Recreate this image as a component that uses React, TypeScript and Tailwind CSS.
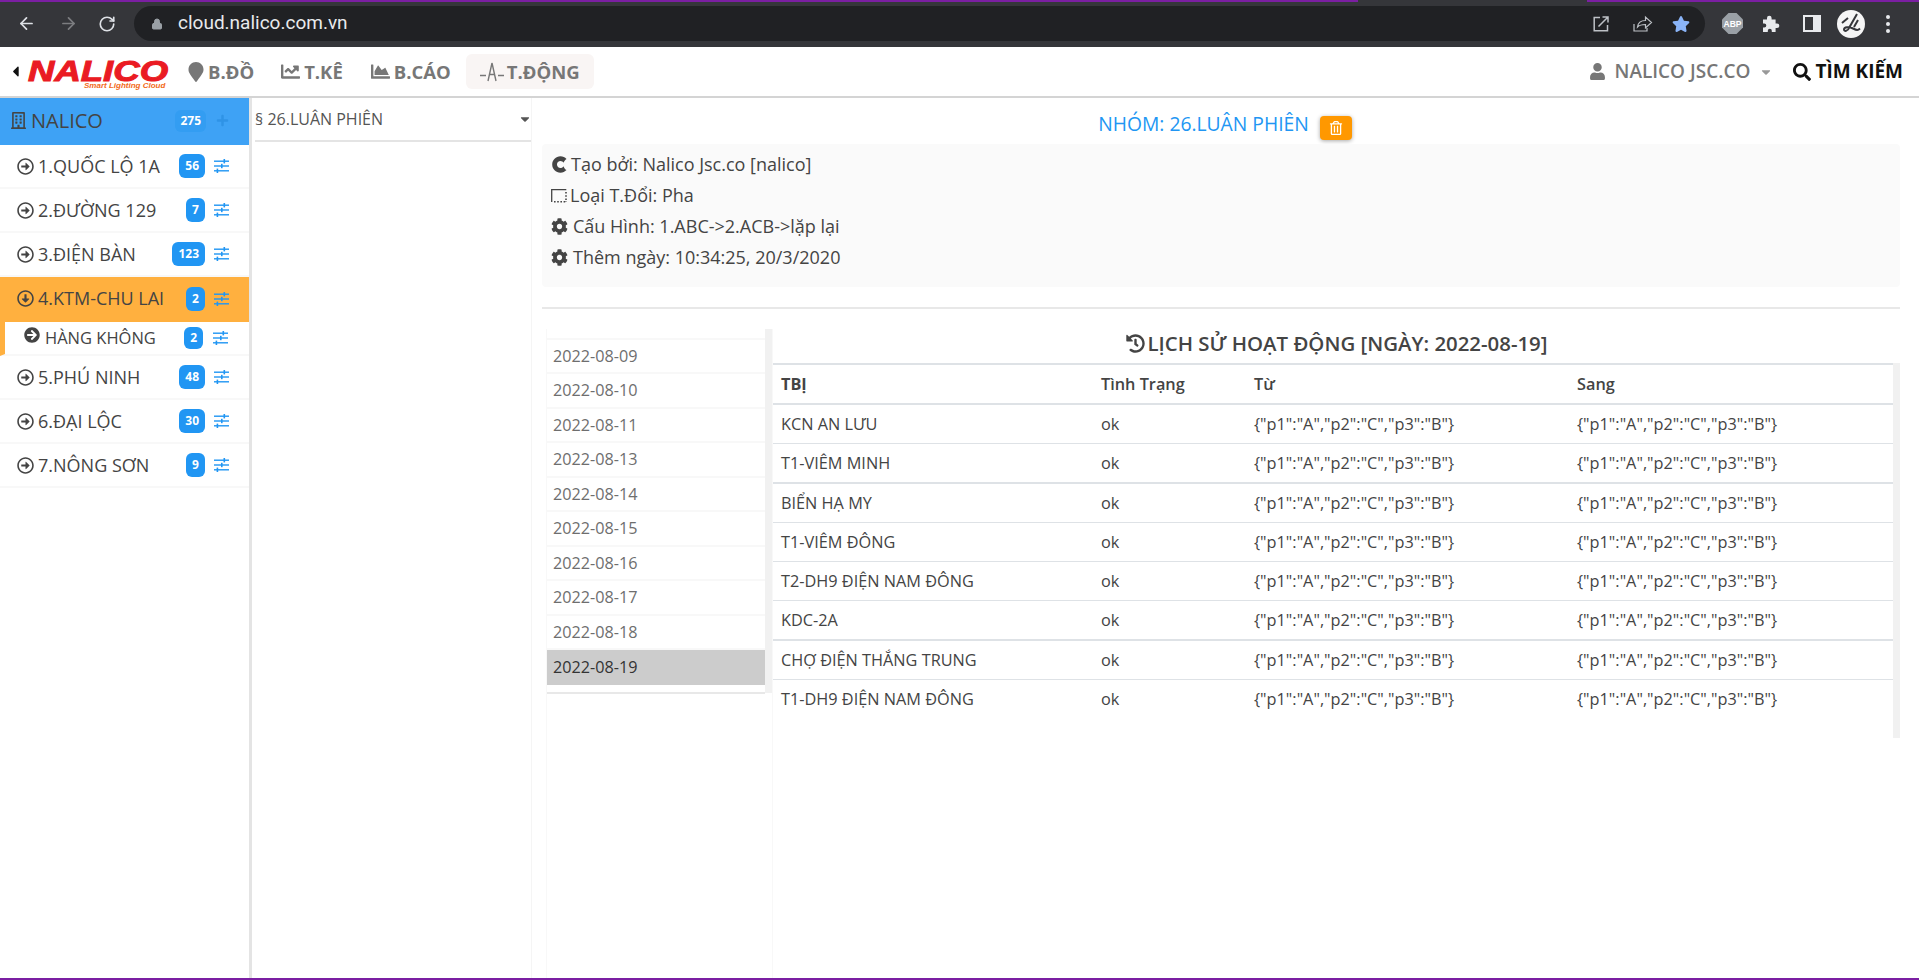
import React from "react"
import {
  FaArrowCircleRight,
  FaCaretDown,
  FaCaretLeft,
  FaChartArea,
  FaChartLine,
  FaCog,
  FaCuttlefish,
  FaHistory,
  FaMapMarker,
  FaPlus,
  FaRegArrowAltCircleDown,
  FaRegArrowAltCircleRight,
  FaRegBuilding,
  FaRegTrashAlt,
  FaSearch,
  FaStar,
  FaUser,
} from "react-icons/fa"
import { ArrowLeft, ArrowRight, RotateCw, Lock } from "lucide-react"

const groups = [
  { name: "1.QUỐC LỘ 1A", count: 56 },
  { name: "2.ĐƯỜNG 129", count: 7 },
  { name: "3.ĐIỆN BÀN", count: 123 },
  { name: "4.KTM-CHU LAI", count: 2, open: true },
  { name: "5.PHÚ NINH", count: 48 },
  { name: "6.ĐẠI LỘC", count: 30 },
  { name: "7.NÔNG SƠN", count: 9 },
]

const dates = [
  "2022-08-09",
  "2022-08-10",
  "2022-08-11",
  "2022-08-13",
  "2022-08-14",
  "2022-08-15",
  "2022-08-16",
  "2022-08-17",
  "2022-08-18",
  "2022-08-19",
]

const devices = [
  "KCN AN LƯU",
  "T1-VIÊM MINH",
  "BIỂN HẠ MY",
  "T1-VIÊM ĐÔNG",
  "T2-DH9 ĐIỆN NAM ĐÔNG",
  "KDC-2A",
  "CHỢ ĐIỆN THẮNG TRUNG",
  "T1-DH9 ĐIỆN NAM ĐÔNG",
]

const phase = '{"p1":"A","p2":"C","p3":"B"}'

// ion-style sliders used on every sidebar row
function Sliders() {
  return (
    <svg width="15" height="14" viewBox="0 0 15 14" className="shrink-0 text-[#2196f3]">
      <g fill="currentColor">
        <rect x="0" y="1.5" width="15" height="1.4" />
        <rect x="0" y="6.3" width="15" height="1.4" />
        <rect x="0" y="11.1" width="15" height="1.4" />
        <rect x="9.5" y="0" width="1.6" height="4.4" />
        <rect x="7" y="4.8" width="1.6" height="4.4" />
        <rect x="2.6" y="9.6" width="1.6" height="4.4" />
      </g>
    </svg>
  )
}

function Badge({ count, small }: { count: number; small?: boolean }) {
  return (
    <span
      className={`flex items-center justify-center rounded-md bg-[#2196f3] font-bold text-white text-[12px] px-[6px] ${
        small ? "h-[22px] min-w-[17px]" : "h-6 min-w-[19px]"
      }`}
    >
      {count}
    </span>
  )
}

function BrowserBar() {
  return (
    <div className="h-[47px] shrink-0 bg-[#35363a] flex flex-col">
      <div className="h-[2px] flex">
        <div className="w-[1358px] bg-[#7b1fa2]" />
        <div className="w-[229px]" />
        <div className="flex-1 bg-[#7b1fa2]" />
      </div>
      <div className="flex-1 flex items-center text-[#dee1e6] pb-[2px]">
        <ArrowLeft className="ml-[17px] w-[19px] h-[19px]" strokeWidth={2.2} />
        <ArrowRight className="ml-[23px] w-[19px] h-[19px] text-[#7c7d80]" strokeWidth={2.2} />
        <RotateCw className="ml-[20px] w-[18px] h-[18px]" strokeWidth={2.2} />
        <div className="ml-[18px] w-[1571px] h-[35px] rounded-full bg-[#202124] flex items-center pl-[17px]">
          <Lock className="w-3 h-[14px] text-[#9aa0a6] fill-[#9aa0a6]" />
          <span className="ml-[15px] text-[19px] text-[#e8eaed] [font-family:Roboto,sans-serif]">cloud.nalico.com.vn</span>
          <div className="ml-auto flex items-center text-[#bdc1c6]">
            <svg width="16" height="16" viewBox="0 0 16 16" fill="none" stroke="currentColor" strokeWidth="1.5">
              <path d="M7 1.5H1.2v13.3h13.3V9" />
              <path d="M5.5 10.5 14.5 1.5M9.5 1h5.5v5.5" />
            </svg>
            <svg width="20" height="17" viewBox="0 0 20 17" fill="none" stroke="currentColor" strokeWidth="1.2" className="ml-[24px]">
              <path d="M1 9v7h13v-3" />
              <path d="M4.5 12c.5-4 3.500-6.500 8-6.500V2l6 5.500-6 5.500V9.500c-3 0-6 .5-8 2.500z" />
            </svg>
            <FaStar className="ml-[19px] mr-[15px] text-[18px] text-[#8ab4f8]" />
          </div>
        </div>
        <svg width="21" height="21" viewBox="0 0 21 21" className="ml-[17px]">
          <polygon points="6.500,0 14.500,0 21,6.500 21,14.500 14.500,21 6.500,21 0,14.500 0,6.500" fill="#9aa0a6" />
          <text x="10.500" y="14" textAnchor="middle" fontSize="8.500" fontWeight="700" fill="#fff" fontFamily="Liberation Sans">ABP</text>
        </svg>
        <svg width="18" height="18" viewBox="0 0 18 18" className="ml-[19px] text-[#e8eaed]">
          <path
            fill="currentColor"
            d="M1 4.500h4V3a2.300 2.300 0 0 1 4.600 0v1.500h4v4H15a2.300 2.300 0 0 1 0 4.600h-1.400V17H9.800v-1.300a2 2 0 0 0-4 0V17H1v-4.500h1.300a2 2 0 0 0 0-4H1z"
          />
        </svg>
        <div className="ml-[23px] w-[18px] h-[17px] border-2 border-[#e8eaed] flex justify-end">
          <div className="w-[6px] bg-[#e8eaed]" />
        </div>
        <svg width="28" height="28" viewBox="0 0 28 28" className="ml-[16px]">
          <circle cx="14" cy="14" r="14" fill="#f5f5f5" />
          <path d="M20 4 12 18c-1 3-5 4-5 1.500s5-3 9-1 5 2 7 0M11 8 5 13M21 10l-4 7" fill="none" stroke="#35363a" strokeWidth="2" />
        </svg>
        <div className="ml-[21px] flex flex-col gap-[3px]">
          <span className="w-1 h-1 rounded-full bg-[#e8eaed]" />
          <span className="w-1 h-1 rounded-full bg-[#e8eaed]" />
          <span className="w-1 h-1 rounded-full bg-[#e8eaed]" />
        </div>
      </div>
    </div>
  )
}

function NavBar() {
  return (
    <div className="h-[51px] shrink-0 bg-white border-b-2 border-[#d4d4d4] flex items-center text-[18.5px] font-bold text-[#777]">
      <FaCaretLeft className="ml-[7px] text-[17px] text-[#111]" />
      <div className="relative ml-[4px] w-[142px] h-[36px]">
        <span className="block mt-[6px] origin-left scale-x-[1.26] italic font-bold text-[29px] leading-[22px] text-[#ea1b23] [font-family:'Liberation_Sans',sans-serif] [-webkit-text-stroke:1px_#ea1b23]">
          NALICO
        </span>
        <span className="absolute left-[56px] top-[28px] whitespace-nowrap italic font-bold text-[8px] leading-none text-[#f26a21] [font-family:'Liberation_Sans',sans-serif]">
          Smart Lighting Cloud
        </span>
      </div>
      <div className="ml-[16px] flex items-center gap-[2px]">
        <FaMapMarker className="text-[20px]" />
        <span>B.ĐỒ</span>
      </div>
      <div className="ml-[27px] flex items-center gap-[4px]">
        <FaChartLine className="text-[19px]" />
        <span>T.KÊ</span>
      </div>
      <div className="ml-[28px] flex items-center gap-[4px]">
        <FaChartArea className="text-[19px]" />
        <span>B.CÁO</span>
      </div>
      <div className="ml-[15px] h-[35px] w-[128px] rounded-md bg-[#f9f5f4] flex items-center pl-[14px] gap-[3px]">
        <svg width="24" height="20" viewBox="0 0 24 20" fill="none" stroke="currentColor" strokeWidth="1.400">
          <path d="M0 13.500h6M18 13.500h6M12 1 8 19M12 1l4 18M9.500 12.500h5" />
        </svg>
        <span>T.ĐỘNG</span>
      </div>
      <div className="ml-auto flex items-center font-semibold text-[19px]">
        <FaUser className="text-[17px]" />
        <span className="ml-[9px]">NALICO JSC.CO</span>
        <FaCaretDown className="ml-[9px] text-[14px] text-[#999]" />
      </div>
      <div className="ml-[20px] mr-[16px] flex items-center gap-[4px] text-[#111] text-[19px]">
        <FaSearch className="text-[18px]" />
        <span>TÌM KIẾM</span>
      </div>
    </div>
  )
}

function Sidebar() {
  return (
    <aside className="w-[252px] shrink-0 border-r-[3px] border-[#e4e4e4] text-[#444] text-[18px] font-medium">
      <div className="h-[47px] bg-[#3ea2f5] flex items-center pl-[10px] pr-[20px] pb-[2px]">
        <FaRegBuilding className="text-[17px]" />
        <span className="ml-[4px] text-[20px] flex-1">NALICO</span>
        <span className="h-[22px] px-[5px] flex items-center rounded-md bg-[#339df2] text-white text-[12px] font-bold">275</span>
        <FaPlus className="ml-[10px] text-[13px] text-[#2f93e6]" />
      </div>
      {groups.map((g) => (
        <React.Fragment key={g.name}>
          <div
            className={`h-[44px] flex items-center pl-[17px] pr-[20px] border-b-2 ${
              g.open ? "bg-[#ffb03f] border-[#ffb03f] h-[45px]" : "bg-white border-[#f8f8f8]"
            }`}
          >
            {g.open ? <FaRegArrowAltCircleDown className="text-[17px]" /> : <FaRegArrowAltCircleRight className="text-[17px]" />}
            <span className="ml-[4px] flex-1">{g.name}</span>
            <Badge count={g.count} />
            <span className="ml-[9px]">
              <Sliders />
            </span>
          </div>
          {g.open && (
            <div className="h-[34px] flex items-center border-l-[5px] border-[#ffb03f] pl-[19px] pr-[21px] text-[16.5px] font-medium border-b-2 border-b-[#f8f8f8]">
              <FaArrowCircleRight className="text-[16px] -mt-[6px]" />
              <span className="ml-[5px] flex-1">HÀNG KHÔNG</span>
              <Badge count={2} small />
              <span className="ml-[10px]">
                <Sliders />
              </span>
            </div>
          )}
        </React.Fragment>
      ))}
    </aside>
  )
}

function InfoRow({ icon, children }: { icon: React.ReactNode; children: React.ReactNode }) {
  return (
    <div className="h-[31px] flex items-center gap-[3px]">
      {icon}
      <span>{children}</span>
    </div>
  )
}

function HistoryTable() {
  return (
    <div className="flex-1 min-w-0 border-l border-[#f8f8f8]">
      <div className="h-[34px] pb-[5px] flex items-center justify-center gap-[3px] text-[20.4px] font-semibold text-[#444]">
        <FaHistory className="text-[19px]" />
        <span>LỊCH SỬ HOẠT ĐỘNG [NGÀY: 2022-08-19]</span>
      </div>
      <div className="flex">
        <table className="flex-1 table-fixed border-collapse text-[16.3px] text-[#444] h-[375px] self-start">
          <thead>
            <tr className="h-[40px] border-t-2 border-b-2 border-[#dee2e6] text-left">
              <th className="w-[328px] pl-[8px] font-bold">TBỊ</th>
              <th className="w-[153px] font-semibold">Tình Trạng</th>
              <th className="w-[323px] font-semibold">Từ</th>
              <th className="font-semibold">Sang</th>
            </tr>
          </thead>
          <tbody>
            {devices.map((d, i) => (
              <tr key={d} className={`h-[39.4px] align-middle ${i > 0 ? "border-t border-[#dee2e6]" : ""} ${i === 2 || i === 6 ? "border-t-2" : ""}`}>
                <td className="pl-[8px]">{d}</td>
                <td>ok</td>
                <td>{phase}</td>
                <td>{phase}</td>
              </tr>
            ))}
            <tr>
              <td colSpan={4} />
            </tr>
          </tbody>
        </table>
        <div className="w-[7px] h-[375px] bg-[#f1f1f1] shrink-0" />
      </div>
    </div>
  )
}

export default function App() {
  return (
    <div className="h-[980px] w-full overflow-hidden flex flex-col bg-white [font-family:'Open_Sans',sans-serif]">
      <BrowserBar />
      <NavBar />
      <div className="flex-1 min-h-0 flex">
        <Sidebar />
        <div className="w-[280px] shrink-0 border-r border-[#f5f5f5] pl-[3px] text-[#555]">
          <div className="h-[44px] border-b-2 border-[#e4e4e4] flex items-center justify-between text-[16px] font-medium">
            <span>§ 26.LUÂN PHIÊN</span>
            <FaCaretDown className="text-[14px] mr-[-1px]" />
          </div>
        </div>
        <main className="flex-1 min-w-0 pl-[10px] pr-[19px] flex flex-col">
          <div className="h-[46px] pt-[6px] pl-[8px] flex items-center justify-center shrink-0">
            <span className="text-[19.3px] font-medium text-[#2196f3]">NHÓM: 26.LUÂN PHIÊN</span>
            <button className="ml-[11px] mt-[7px] w-8 h-6 rounded-[4px] bg-[#ff9800] flex items-center justify-center text-white shadow-[0_1px_4px_rgba(0,0,0,0.35)]">
              <FaRegTrashAlt className="text-[14px]" />
            </button>
          </div>
          <div className="h-[143px] shrink-0 bg-[#fafafa] rounded-sm pt-[5px] pl-[9px] text-[18px] text-[#444]">
            <InfoRow icon={<FaCuttlefish className="text-[17px]" />}>Tạo bởi: Nalico Jsc.co [nalico]</InfoRow>
            <InfoRow
              icon={
                <svg width="16" height="15" viewBox="0 0 16 15" fill="none" stroke="currentColor" strokeWidth="1.300">
                  <path d="M.7 14V1.700h14.600" />
                  <path d="M15 4v10M3 13.800h12" strokeDasharray="1.600 1.600" strokeWidth="1.600" />
                </svg>
              }
            >
              Loại T.Đổi: Pha
            </InfoRow>
            <InfoRow icon={<FaCog className="text-[17px] mr-[2px]" />}>Cấu Hình: 1.ABC-&gt;2.ACB-&gt;lặp lại</InfoRow>
            <InfoRow icon={<FaCog className="text-[17px] mr-[2px]" />}>Thêm ngày: 10:34:25, 20/3/2020</InfoRow>
          </div>
          <div className="mt-[20px] h-[2px] bg-[#e8e8e8] shrink-0" />
          <div className="mt-[20px] flex-1 flex pl-[4px]">
            <div className="w-[219px] shrink-0 border-l border-[#f8f8f8] flex flex-col">
              <div className="h-[10.500px] border-b-2 border-[#f8f8f8]" />
              {dates.map((d) => (
                <div
                  key={d}
                  className={`h-[34.500px] flex items-center pl-[6px] text-[16.2px] ${
                    d === "2022-08-19" ? "bg-[#ccc] text-[#333]" : "border-b-2 border-[#f8f8f8] text-[#6e6e6e]"
                  }`}
                >
                  {d}
                </div>
              ))}
              <div className="h-[9px] border-b-2 border-[#e8e8e8]" />
            </div>
            <div className="w-[7px] h-[364px] bg-[#f1f1f1] shrink-0" />
            <HistoryTable />
          </div>
        </main>
      </div>
      <div className="h-[2px] shrink-0 bg-[#7b1fa2]" />
    </div>
  )
}
